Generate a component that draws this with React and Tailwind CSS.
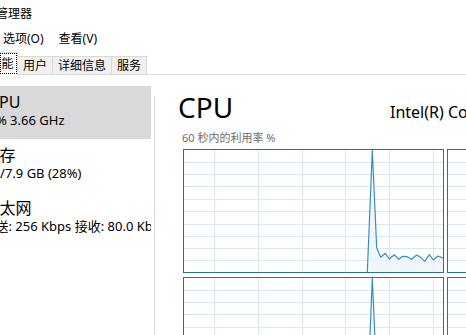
import React from "react";

const VX = [30.5, 74.5, 118.5, 161.5, 205.5, 249.5];
const HY = [12.5, 24.5, 36.5, 49.5, 61.5, 74.5, 86.5, 98.5, 110.5];

const LINE_A = [
  [183.3, 122], [188.3, 0.5], [192.7, 97.7], [196.7, 107.3], [201.3, 103.3], [205.3, 109],
  [210.3, 104.7], [214.7, 109.3], [218.7, 106.3], [223.3, 106.7], [227.7, 109.3],
  [232.7, 105], [236.7, 107.3], [240.7, 111.3], [245.3, 104.7], [249.3, 110],
  [253.7, 106], [259, 108],
];
const LINE_B = [
  [183.3, 122], [188.3, 0.5], [192.7, 99], [196.7, 108], [201.3, 104], [205.3, 110],
  [210.3, 105], [214.7, 110], [218.7, 107], [223.3, 108], [227.7, 110],
  [232.7, 106], [236.7, 108], [240.7, 111], [245.3, 105], [249.3, 110],
  [253.7, 107], [259, 108],
];

function Graph({ data }) {
  const line = data ? data.map((p) => p.join(",")).join(" ") : null;
  const area = data
    ? `${data[0][0]},122 ` + data.map((p) => p.join(",")).join(" ") + ` 259,122`
    : null;
  return (
    <div className="w-[261px] h-[124px] border border-[#27748f] bg-white">
      <svg width="259" height="122" className="block">
        {VX.map((x) => (
          <line key={"v" + x} x1={x} x2={x} y1={0} y2={122} stroke="#d6e9f1" strokeWidth="1" />
        ))}
        {HY.map((y) => (
          <line key={"h" + y} x1={0} x2={259} y1={y} y2={y} stroke="#d6e9f1" strokeWidth="1" />
        ))}
        {data && <polygon points={area} fill="#eef5fa" fillOpacity="0.85" />}
        {data && (
          <polyline points={line} fill="none" stroke="#3b8fc0" strokeWidth="1.2" strokeLinejoin="round" />
        )}
      </svg>
    </div>
  );
}

function Item({ selected, title, titleMl, sub, subMl }) {
  return (
    <div
      className={
        "h-[53px] w-[151px] pt-[6px] whitespace-nowrap overflow-hidden text-black " +
        (selected ? "bg-[#d9d9d9]" : "bg-white")
      }
    >
      <div className="text-[16px] leading-[20px]" style={{ marginLeft: titleMl }}>
        {title}
      </div>
      <div className="text-[13px] leading-[17px]" style={{ marginLeft: subMl }}>
        {sub}
      </div>
    </div>
  );
}

export default function App() {
  return (
    <div className="w-[466px] h-[335px] overflow-hidden bg-white text-black flex flex-col font-['Noto_Sans','Noto_Sans_CJK_SC',sans-serif]">
      {/* title bar */}
      <div className="h-[27px] shrink-0 flex items-center whitespace-nowrap text-[12px]">
        <span className="ml-[-28px]">任务管理器</span>
      </div>
      {/* menu bar */}
      <div className="h-[23px] shrink-0 flex items-center whitespace-nowrap text-[12px]">
        <span className="ml-[3px]">选项(O)</span>
        <span className="ml-[15px]">查看(V)</span>
      </div>
      {/* tabs */}
      <div className="h-[25px] shrink-0 flex items-end whitespace-nowrap text-[12px]">
        <div className="w-[18px] h-[23px] bg-white border-t border-r border-[#d9d9d9] overflow-hidden">
          <div className="w-[17px] h-[21px] border border-dotted border-black flex items-center overflow-hidden">
            <span className="ml-[-11.5px]">性能</span>
          </div>
        </div>
        <div className="h-[19px] bg-[#f0f0f0] border-t border-r border-b border-[#d9d9d9] px-[5px] flex items-center">
          用户
        </div>
        <div className="h-[19px] bg-[#f0f0f0] border-t border-r border-b border-[#d9d9d9] px-[5px] flex items-center">
          详细信息
        </div>
        <div className="h-[19px] bg-[#f0f0f0] border-t border-r border-b border-[#d9d9d9] px-[5px] flex items-center">
          服务
        </div>
        <div className="flex-1 border-b border-[#e3e3e3]" />
      </div>
      {/* content */}
      <div className="flex flex-1 min-h-0">
        <div className="w-[154px] shrink-0 overflow-hidden pt-[11px]">
          <Item selected title="CPU" titleMl="-11px" sub="5% 3.66 GHz" subMl="-11.5px" />
          <Item title="内存" titleMl="-16.5px" sub="2.2/7.9 GB (28%)" subMl="-18.3px" />
          <Item title="以太网" titleMl="-16.5px" sub="发送: 256 Kbps 接收: 80.0 Kbps" subMl="-17.5px" />
        </div>
        <div className="w-px shrink-0 bg-[#d9d9d9] mt-[21px]" />
        <div className="flex-1 min-w-0 pl-[27px] pt-[15px] whitespace-nowrap">
          <div className="flex items-baseline">
            <div className="w-[212px] shrink-0 ml-[-4px] text-[28px] leading-[34px]">CPU</div>
            <div className="text-[16px] leading-[20px]">Intel(R) Core(TM) i5-9600K CPU @ 3.70GHz</div>
          </div>
          <div className="mt-[7px] text-[11px] leading-[14px] text-[#6d6d6d]">60 秒内的利用率 %</div>
          <div className="mt-[4px] ml-[1px] grid grid-cols-[261px_261px] gap-x-[3px] gap-y-[4px]">
            <Graph data={LINE_A} />
            <Graph />
            <Graph data={LINE_B} />
            <Graph />
          </div>
        </div>
      </div>
    </div>
  );
}
